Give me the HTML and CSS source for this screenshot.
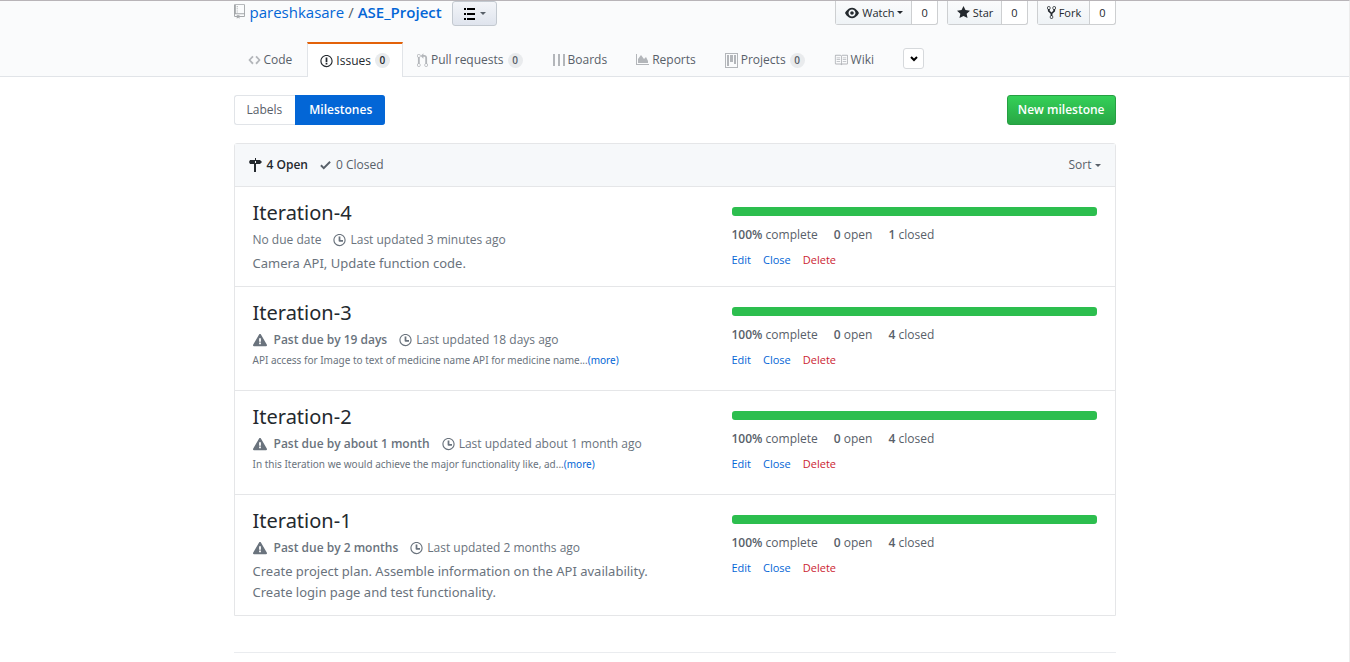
FILE: index.html
```html
<!DOCTYPE html>
<html lang="en">
<head>
<meta charset="utf-8">
<title>Milestones - pareshkasare/ASE_Project</title>
<link rel="stylesheet" href="styles.css">
</head>
<body>
<svg class="sprite" aria-hidden="true">
  <symbol id="clock" viewBox="0 0 14 16"><path d="M8 8h3v2H7c-.55 0-1-.45-1-1V4h2v4zM7 2.3c3.14 0 5.7 2.56 5.7 5.7s-2.56 5.7-5.7 5.7A5.71 5.71 0 0 1 1.3 8c0-3.14 2.56-5.7 5.7-5.7zM7 1C3.14 1 0 4.14 0 8s3.14 7 7 7 7-3.14 7-7-3.14-7-7-7z"/></symbol>
  <symbol id="alert" viewBox="0 0 16 16"><path d="M8.893 1.5c-.183-.31-.52-.5-.887-.5s-.703.19-.886.5L.138 13.499a.98.98 0 0 0 0 1.001c.193.31.53.501.886.501h13.964c.367 0 .704-.19.877-.5a1.03 1.03 0 0 0 .01-1.002L8.893 1.5zm.133 11.497H6.987v-2.003h2.039v2.003zm0-3.004H6.987V5.987h2.039v4.006z"/></symbol>
</svg>
<header class="page-head">
  <div class="container">
    <div class="title-row">
      <h1 class="repo-title">
        <svg class="icon repo-icon" width="11" height="15" viewBox="0 0 12 16"><path d="M4 9H3V8h1v1zm0-3H3v1h1V6zm0-2H3v1h1V4zm0-2H3v1h1V2zm8-1v12c0 .55-.45 1-1 1H6v2l-1.5-1.5L3 16v-2H1c-.55 0-1-.45-1-1V1c0-.55.45-1 1-1h10c.55 0 1 .45 1 1zm-1 10H1v2h2v-1h3v1h5v-2zm0-10H2v9h9V1z"/></svg>
        <a href="#">pareshkasare</a><span class="slash">/</span><a class="repo-name" href="#">ASE_Project</a>
      </h1>
      <button class="list-btn" type="button" aria-label="Boards list">
        <svg width="11" height="12" viewBox="0 0 11 12"><path d="M0 0h2v2H0zM3 0h8v2H3zM0 5h2v2H0zM3 5h8v2H3zM0 10h2v2H0zM3 10h8v2H3z"/></svg>
        <span class="caret"></span>
      </button>
      <ul class="actions">
        <li class="action"><button type="button"><svg width="14" height="14" viewBox="0 0 16 16"><path d="M8.060 2C3 2 0 8 0 8s3 6 8.060 6C13 14 16 8 16 8s-3-6-7.940-6zM8 12c-2.200 0-4-1.780-4-4 0-2.200 1.800-4 4-4 2.220 0 4 1.800 4 4 0 2.220-1.780 4-4 4zm2-4c0 1.110-.89 2-2 2-1.110 0-2-.89-2-2 0-1.110.89-2 2-2 1.110 0 2 .89 2 2z"/></svg>Watch<span class="caret"></span></button><a href="#">0</a></li>
        <li class="action"><button type="button"><svg width="13" height="15" viewBox="0 0 14 16"><path d="M14 6l-4.900-.64L7 1 4.900 5.360 0 6l3.600 3.260L2.670 14 7 11.670 11.330 14l-.93-4.740L14 6z"/></svg>Star</button><a href="#">0</a></li>
        <li class="action"><button type="button"><svg width="9" height="15" viewBox="0 0 10 16"><path d="M8 1a1.993 1.993 0 0 0-1 3.720V6L5 8 3 6V4.720A1.993 1.993 0 0 0 2 1a1.993 1.993 0 0 0-1 3.720V6.500l3 3v1.780A1.993 1.993 0 0 0 5 15a1.993 1.993 0 0 0 1-3.720V9.500l3-3V4.720A1.993 1.993 0 0 0 8 1zM2 4.200C1.340 4.200.8 3.650.8 3c0-.65.55-1.200 1.200-1.200.65 0 1.200.55 1.200 1.200 0 .65-.55 1.200-1.200 1.200zm3 10c-.66 0-1.200-.55-1.200-1.200 0-.65.55-1.200 1.200-1.200.65 0 1.200.55 1.200 1.200 0 .65-.55 1.200-1.200 1.200zm3-10c-.66 0-1.200-.55-1.200-1.200 0-.65.55-1.200 1.200-1.200.65 0 1.200.55 1.200 1.200 0 .65-.55 1.200-1.200 1.200z"/></svg>Fork</button><a href="#">0</a></li>
      </ul>
    </div>
    <nav class="tabs" aria-label="Repository">
      <a class="tab" href="#"><svg width="13" height="14" viewBox="0 0 14 16"><path d="M9.500 3L8 4.500 11.500 8 8 11.500 9.500 13 14 8 9.500 3zm-5 0L0 8l4.500 5L6 11.500 2.500 8 6 4.500 4.500 3z"/></svg>Code</a>
      <a class="tab tab-on" href="#" aria-current="page"><svg width="13" height="14" viewBox="0 0 14 16"><path d="M7 2.300c3.140 0 5.700 2.560 5.700 5.700s-2.560 5.700-5.700 5.700A5.710 5.710 0 0 1 1.300 8c0-3.140 2.560-5.700 5.700-5.700zM7 1C3.140 1 0 4.140 0 8s3.140 7 7 7 7-3.140 7-7-3.140-7-7-7zm1 3H6v5h2V4zm0 6H6v2h2v-2z"/></svg>Issues<span class="count">0</span></a>
      <a class="tab" href="#"><svg width="11" height="15" viewBox="0 0 12 16"><path d="M11 11.280V5c-.03-.78-.34-1.470-.94-2.060C9.460 2.350 8.780 2.030 8 2H7V0L4 3l3 3V4h1c.27.02.48.11.69.31.21.2.3.42.31.69v6.280A1.993 1.993 0 0 0 10 15a1.993 1.993 0 0 0 1-3.720zm-1 2.920c-.66 0-1.200-.55-1.200-1.200 0-.65.55-1.200 1.200-1.200.65 0 1.200.55 1.200 1.200 0 .65-.55 1.200-1.200 1.200zM4 3c0-1.110-.89-2-2-2a1.993 1.993 0 0 0-1 3.720v6.560A1.993 1.993 0 0 0 2 15a1.993 1.993 0 0 0 1-3.720V4.720c.59-.34 1-.98 1-1.720zm-.8 10c0 .66-.55 1.200-1.200 1.200-.65 0-1.200-.55-1.200-1.200 0-.65.55-1.200 1.200-1.200.65 0 1.200.55 1.200 1.200zM2 4.200C1.340 4.200.8 3.650.8 3c0-.65.55-1.200 1.200-1.200.65 0 1.200.55 1.200 1.200 0 .65-.55 1.200-1.200 1.200z"/></svg>Pull requests<span class="count">0</span></a>
      <a class="tab" href="#"><svg width="13" height="12" viewBox="0 0 13 12"><path d="M1 0h2v12H1zM6 0h2v12H6zM11 0h2v12h-2z"/></svg>Boards</a>
      <a class="tab" href="#"><svg width="13" height="12" viewBox="0 0 13 12"><path d="M0 0h1v10h12v1H0zM2 9V5l3-4 3 4 2-2 2 4v2z"/></svg>Reports</a>
      <a class="tab" href="#"><svg width="13" height="15" viewBox="0 0 13 15"><path fill-rule="evenodd" d="M0 0h13v15H0zM1 1v13h11V1zM2 2h2v11H2zM5 2h3v7H5zM9 2h2v9H9z"/></svg>Projects<span class="count">0</span></a>
      <a class="tab" href="#"><svg width="14" height="14" viewBox="0 0 16 16"><path d="M3 5h4v1H3V5zm0 3h4V7H3v1zm0 2h4V9H3v1zm11-5h-4v1h4V5zm0 2h-4v1h4V7zm0 2h-4v1h4V9zm2-6v9c0 .55-.45 1-1 1H9.500l-1 1-1-1H2c-.55 0-1-.45-1-1V3c0-.55.45-1 1-1h5.500l1 1 1-1H15c.55 0 1 .45 1 1zm-8 .5L7.500 3H2v9h6V3.500zm7-.5H9.500l-.5.5V12h6V3z"/></svg>Wiki</a>
      <button class="more-btn" type="button" aria-label="More tabs"><svg width="8" height="6" viewBox="0 0 8 6"><path d="M1 1l3 3 3-3" fill="none" stroke="#000" stroke-width="2"/></svg></button>
    </nav>
  </div>
</header>
<main class="container">
  <div class="toolbar">
    <nav class="subnav" aria-label="Issues"><a href="#">Labels</a><a class="subnav-on" href="#">Milestones</a></nav>
    <a class="new-btn" href="#">New milestone</a>
  </div>
  <section class="box">
    <div class="box-head">
      <a class="state state-on" href="#"><svg width="13" height="14" viewBox="0 0 13 14"><path fill-rule="evenodd" d="M6 0h1v2h4l2 2-2 2H7v8H5V6H1L0 4l1-2h5zM6 3v2h1V3z"/></svg>4 Open</a>
      <a class="state" href="#"><svg width="11" height="14" viewBox="0 0 12 16"><path d="M12 5l-8 8-4-4 1.500-1.500L4 10l6.500-6.500L12 5z"/></svg>0 Closed</a>
      <button class="sort" type="button">Sort<span class="caret"></span></button>
    </div>
    <article class="row">
      <div class="info">
        <h2><a href="#">Iteration-4</a></h2>
        <p class="meta"><span>No due date</span><span class="updated"><svg width="13" height="14"><use href="#clock"/></svg>Last updated 3 minutes ago</span></p>
        <p class="desc">Camera API, Update function code.</p>
      </div>
      <div class="stats">
        <div class="bar"><div class="fill" style="width:100%"></div></div>
        <p class="nums"><span><b>100%</b> complete</span><span><b>0</b> open</span><span><b>1</b> closed</span></p>
        <p class="links"><a href="#">Edit</a><button type="button">Close</button><button class="del" type="button">Delete</button></p>
      </div>
    </article>
    <article class="row">
      <div class="info">
        <h2><a href="#">Iteration-3</a></h2>
        <p class="meta"><span class="late"><svg width="14" height="14"><use href="#alert"/></svg>Past due by 19 days</span><span class="updated"><svg width="13" height="14"><use href="#clock"/></svg>Last updated 18 days ago</span></p>
        <p class="desc short">API access for Image to text of medicine name API for medicine name...<a href="#">(more)</a></p>
      </div>
      <div class="stats">
        <div class="bar"><div class="fill" style="width:100%"></div></div>
        <p class="nums"><span><b>100%</b> complete</span><span><b>0</b> open</span><span><b>4</b> closed</span></p>
        <p class="links"><a href="#">Edit</a><button type="button">Close</button><button class="del" type="button">Delete</button></p>
      </div>
    </article>
    <article class="row">
      <div class="info">
        <h2><a href="#">Iteration-2</a></h2>
        <p class="meta"><span class="late"><svg width="14" height="14"><use href="#alert"/></svg>Past due by about 1 month</span><span class="updated"><svg width="13" height="14"><use href="#clock"/></svg>Last updated about 1 month ago</span></p>
        <p class="desc short">In this Iteration we would achieve the major functionality like, ad...<a href="#">(more)</a></p>
      </div>
      <div class="stats">
        <div class="bar"><div class="fill" style="width:100%"></div></div>
        <p class="nums"><span><b>100%</b> complete</span><span><b>0</b> open</span><span><b>4</b> closed</span></p>
        <p class="links"><a href="#">Edit</a><button type="button">Close</button><button class="del" type="button">Delete</button></p>
      </div>
    </article>
    <article class="row">
      <div class="info">
        <h2><a href="#">Iteration-1</a></h2>
        <p class="meta"><span class="late"><svg width="14" height="14"><use href="#alert"/></svg>Past due by 2 months</span><span class="updated"><svg width="13" height="14"><use href="#clock"/></svg>Last updated 2 months ago</span></p>
        <p class="desc">Create project plan. Assemble information on the API availability.<br>Create login page and test functionality.</p>
      </div>
      <div class="stats">
        <div class="bar"><div class="fill" style="width:100%"></div></div>
        <p class="nums"><span><b>100%</b> complete</span><span><b>0</b> open</span><span><b>4</b> closed</span></p>
        <p class="links"><a href="#">Edit</a><button type="button">Close</button><button class="del" type="button">Delete</button></p>
      </div>
    </article>
  </section>
  <hr class="rule">
</main>
</body>
</html>
```
FILE: styles.css
```css
* { box-sizing: border-box; }
body {
  margin: 0;
  min-height: 100vh;
  border-top: 1px solid #b8b4b8;
  border-right: 1px solid #ececec;
  background: #fff;
  color: #586069;
  font: 12px/18px "Open Sans", "Noto Sans", sans-serif;
}
h1, h2, p, ul { margin: 0; padding: 0; font-weight: 400; }
a { color: #0366d6; text-decoration: none; }
button { margin: 0; font: inherit; cursor: pointer; }
svg { flex: none; fill: currentColor; }
.sprite { display: none; }
.container { max-width: 882px; margin: 0 auto; }
.caret {
  border: 3px solid transparent;
  border-top-color: currentColor;
  border-bottom: 0;
}

.page-head { background: #fafbfc; border-bottom: 1px solid #e1e4e8; }
.title-row { display: flex; height: 25px; }
.repo-title { display: flex; align-items: flex-start; font-size: 15px; line-height: 22px; }
.repo-icon { margin: 3px 5px 0 0; color: #a3a6a9; }
.slash { margin: 0 4px; }
.repo-name { font-weight: 600; }
.list-btn {
  display: flex;
  align-items: center;
  gap: 5px;
  margin-left: 10px;
  padding: 0 10px 0 11px;
  border: 1px solid #c3c9d0;
  border-radius: 3px;
  background: linear-gradient(#f3f5f9, #dfe4ed);
  color: #000;
}
.list-btn .caret { color: #586069; }
.actions { display: flex; gap: 9px; height: 24px; margin-left: auto; list-style: none; }
.action {
  display: flex;
  border: 1px solid #cdcfd1;
  border-top: 0;
  border-radius: 0 0 3px 3px;
  background: #fff;
  color: #24292e;
  font-size: 11px;
}
.action button {
  display: flex;
  align-items: center;
  gap: 3px;
  padding: 0 8px 0 9px;
  border: 0;
  border-right: 1px solid #cdcfd1;
  background: linear-gradient(#fafbfc, #eff3f6);
  color: inherit;
}
.action a { padding: 3px 9px; color: inherit; }

.tabs { display: flex; margin-top: 16px; }
.tab {
  display: flex;
  align-items: center;
  gap: 3px;
  height: 34px;
  padding: 2px 15px 0 14px;
  color: #586069;
}
.tab svg { color: #b3b6ba; }
.tab-on {
  height: 35px;
  margin-bottom: -1px;
  padding: 0 12px;
  border: 1px solid #e1e4e8;
  border-top: 2px solid #e36209;
  border-bottom: 0;
  background: #fff;
  color: #24292e;
}
.tab-on svg { color: #24292e; }
.count {
  min-width: 15px;
  margin-left: 1px;
  border-radius: 8px;
  background: #e9ebed;
  font-size: 10px;
  font-weight: 600;
  line-height: 15px;
  text-align: center;
}
.more-btn {
  display: grid;
  place-items: center;
  width: 21px;
  height: 21px;
  margin: 6px 0 0 14px;
  padding: 0;
  border: 1px solid #d6d9dc;
  border-radius: 3px;
  background: #fff;
}

.toolbar { display: flex; justify-content: space-between; margin: 18px 0; }
.subnav { display: flex; }
.subnav a {
  padding: 4px 13px 4px 12px;
  border: 1px solid #e1e4e8;
  border-right: 0;
  border-radius: 3px 0 0 3px;
  color: #586069;
  line-height: 20px;
}
.subnav .subnav-on {
  padding: 4px 13px;
  border-color: #0366d6;
  border-radius: 0 3px 3px 0;
  background: #0366d6;
  color: #fff;
  font-weight: 600;
}
.new-btn {
  padding: 4px 10px;
  border: 1px solid #269f42;
  border-radius: 3px;
  background: linear-gradient(#34d058, #28a745);
  color: #fff;
  font-weight: 600;
  line-height: 20px;
}

.box { border: 1px solid #e5e6e8; border-radius: 3px 3px 0 0; }
.box-head {
  display: flex;
  align-items: center;
  gap: 12px;
  height: 42px;
  padding: 0 14px;
  background: #f6f8fa;
}
.state { display: flex; align-items: center; gap: 5px; color: #586069; }
.state-on { color: #24292e; font-weight: 600; }
.sort {
  display: flex;
  align-items: center;
  gap: 3px;
  margin-left: auto;
  padding: 0;
  border: 0;
  background: none;
  color: inherit;
}

.row {
  display: flex;
  justify-content: space-between;
  min-height: 104px;
  padding: 12px 18px;
  border-top: 1px solid #e5e6e8;
}
.row:nth-of-type(1) { min-height: 100px; }
h2 { margin-bottom: 3px; font: 20px/28px "Noto Sans", sans-serif; }
h2 a { color: #24292e; }
.meta { display: flex; gap: 12px; line-height: 20px; }
.meta, .desc { color: #6a737d; }
.late { display: flex; align-items: center; gap: 7px; font-weight: 600; }
.updated { display: flex; align-items: center; gap: 4px; }
.desc { margin-top: 3px; font: 13px/21px "Noto Sans", sans-serif; }
.short { margin-top: 1px; font-size: 10px; line-height: 18px; }
.stats { width: 365px; padding-top: 8px; }
.bar { height: 9px; border-radius: 3px; background: #eaecef; overflow: hidden; }
.fill { height: 100%; background: #2cbe4e; }
.nums { display: flex; gap: 16px; margin-top: 10px; }
.nums b { font-weight: 600; }
.links { display: flex; gap: 12px; margin-top: 7px; font-size: 11px; }
.links button { padding: 0; border: 0; background: none; color: #0366d6; }
.links .del { color: #cb2431; }
.rule { height: 1px; margin: 36px 0 0; border: 0; background: #eaecef; }
```
